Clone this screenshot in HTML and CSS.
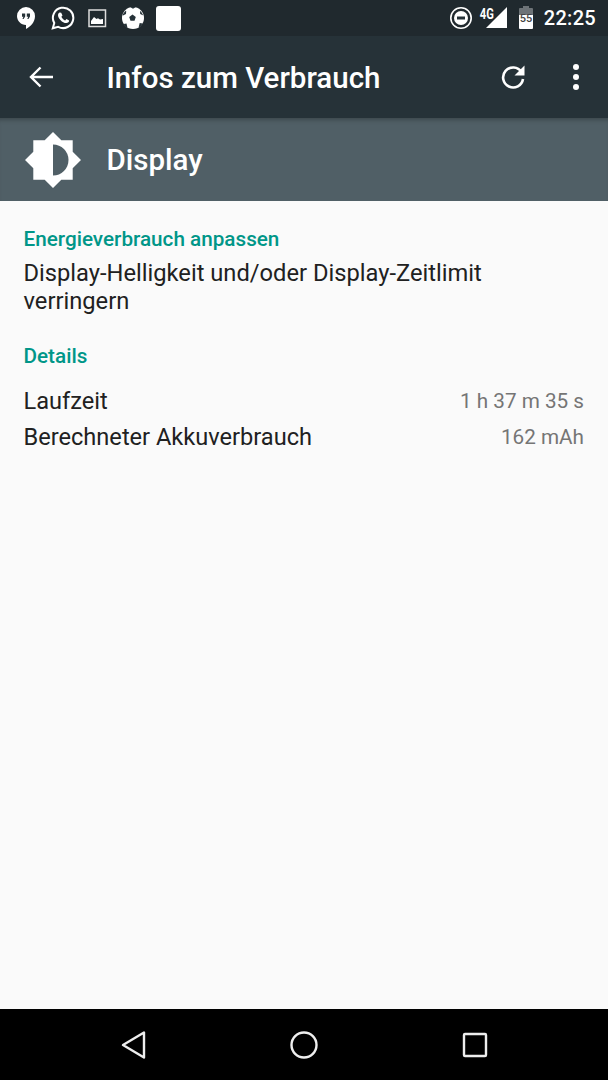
FILE: index.html
```html
<!DOCTYPE html>
<html lang="de">
<head>
<meta charset="UTF-8" />
<meta name="viewport" content="width=device-width, initial-scale=1" />
<title>Infos zum Verbrauch</title>
<link rel="stylesheet" href="styles.css">
</head>
<body>

<!-- Status bar -->
<div class="status-bar">
  <div class="status-left">
    <svg class="ic-hangouts" width="20" height="24" viewBox="0 0 20 24"><path fill="#fff" d="M10 1a9 9 0 0 0-9 9c0 5 4 8.800 9 9v4c4.500-2.300 9-6.800 9-13a9 9 0 0 0-9-9z"/><path fill="#263238" d="M6 7.500h3.200v3l-1.600 2.500h-1.100l.9-2.300H6zM10.800 7.500H14v3l-1.600 2.500h-1.100l.9-2.300h-1.400z"/></svg>
    <svg class="ic-whatsapp" width="24" height="24" viewBox="0 0 24 24"><path fill="none" stroke="#fff" stroke-width="2" d="M1.800 22.300l1.500-5.300a10.200 10.200 0 1 1 3.900 3.800z"/><path fill="#fff" d="M8.700 6.600c-.5 0-1.700.9-1.700 2.600 0 3 4.300 7.900 8.300 7.900 1.700 0 2.900-1.200 2.800-2.500l-2.600-1.500-1.300 1.300c-1.500-.5-3.100-2-3.800-3.700l1.100-1.200-1.300-2.800z"/></svg>
    <svg class="ic-image" width="20" height="20" viewBox="0 0 20 20"><path fill="none" stroke="#ddd" stroke-width="1.500" d="M2 2h16.500v16.500H2z"/><path fill="#fff" d="M4 16v-3l3-4 2.500 2 1.500-.7 2 1.200 3-.5V16z"/></svg>
    <svg class="ic-ball" width="24" height="24" viewBox="0 0 24 24"><circle cx="12" cy="12" r="11" fill="#fff"/><path fill="#263238" d="M11.500 8.500l3.300 2.400-1.300 3.800h-4l-1.300-3.800zM9.500 1.300l2.500 1.500 2.500-1.500-.2-.3a11 11 0 0 0-4.600 0zM19 5.200l.2 2.800 2.600 1.300.2-.4a11 11 0 0 0-2.800-3.900zM2 9.400L5 8l.2-3.100-.4-.2A11 11 0 0 0 1.500 9zM5.500 17.500l-2.900.4a11 11 0 0 0 3.200 3.500l.5-.3zM18.700 17l-1 4 .5.300a11 11 0 0 0 3.500-3.800z"/></svg>
    <span class="ic-blank"></span>
  </div>
  <div class="status-right">
    <svg class="ic-dnd" width="24" height="24" viewBox="0 0 24 24"><circle cx="12" cy="12" r="10.200" fill="none" stroke="#fff" stroke-width="1.600"/><circle cx="12" cy="12" r="7" fill="#fff"/><rect x="8" y="10.500" width="8" height="3" fill="#263238"/></svg>
    <span class="signal">
      <span class="signal-type">4G</span>
      <svg width="22" height="22" viewBox="0 0 22 22"><path fill="#fff" d="M21 0v21H0z"/></svg>
    </span>
    <span class="battery"><span class="battery-level">55</span></span>
    <span class="clock">22:25</span>
  </div>
</div>

<!-- Toolbar -->
<header class="toolbar">
  <svg class="ic-back" width="26" height="24" viewBox="0 0 26 24"><path fill="none" stroke="#fff" stroke-width="2.400" d="M25 12H3M12.500 2.500L3 12l9.500 9.500"/></svg>
  <h1 class="toolbar-title">Infos zum Verbrauch</h1>
  <svg class="ic-refresh" width="26" height="26" viewBox="0 0 26 26"><path fill="none" stroke="#fff" stroke-width="2.600" d="M21.500 8A10 10 0 1 0 23 15"/><path fill="#fff" d="M24.500 1.500v10h-10z"/></svg>
  <span class="ic-more"><i></i><i></i><i></i></span>
</header>

<!-- App header -->
<section class="app-header">
  <svg class="ic-display" width="56" height="56" viewBox="0 0 56 56"><path fill="#fff" d="M28 0l8.300 8.300h11.400v11.400L56 28l-8.300 8.300v11.400H36.300L28 56l-8.300-8.300H8.300V36.300L0 28l8.300-8.300V8.300h11.400z"/><path fill="#505f66" d="M28 12.500a15.500 15.500 0 0 1 0 31z"/></svg>
  <h2 class="app-name">Display</h2>
</section>

<main class="content">
  <h3 class="section-title">Energieverbrauch anpassen</h3>
  <p class="tip">Display-Helligkeit und/oder Display-Zeitlimit verringern</p>

  <h3 class="section-title details-title">Details</h3>
  <div class="detail-row">
    <span>Laufzeit</span>
    <span class="detail-value">1 h 37 m 35 s</span>
  </div>
  <div class="detail-row">
    <span>Berechneter Akkuverbrauch</span>
    <span class="detail-value">162 mAh</span>
  </div>
</main>

<!-- Navigation bar -->
<nav class="nav-bar">
  <svg width="26" height="30" viewBox="0 0 26 30"><path fill="none" stroke="#eee" stroke-width="2.400" stroke-linejoin="round" d="M24 2.500v25L3 15z"/></svg>
  <svg width="28" height="28" viewBox="0 0 28 28"><circle cx="14" cy="14" r="12.500" fill="none" stroke="#eee" stroke-width="2.400"/></svg>
  <svg width="26" height="26" viewBox="0 0 26 26"><rect x="2" y="2" width="22" height="22" rx="1" fill="none" stroke="#eee" stroke-width="2.400"/></svg>
</nav>

</body>
</html>
```

FILE: styles.css
```css
html, body {
  margin: 0;
  padding: 0;
}

body {
  width: 608px;
  height: 1080px;
  display: flex;
  flex-direction: column;
  overflow: hidden;
  background: #fafafa;
  font-family: Roboto, sans-serif;
  color: #212121;
}

h1, h2, h3, p {
  margin: 0;
}

/* Status bar */
.status-bar {
  height: 36px;
  flex: none;
  display: flex;
  justify-content: space-between;
  align-items: center;
  background: #20292e;
  color: #fff;
}

.status-left {
  display: flex;
  align-items: center;
  padding-left: 16px;
}

.ic-whatsapp {
  margin-left: 15px;
}

.ic-image {
  margin-left: 12px;
}

.ic-ball {
  margin-left: 14px;
}

.ic-blank {
  width: 25px;
  height: 25px;
  margin-left: 11px;
  background: #fff;
  border-radius: 3px;
}

.status-right {
  display: flex;
  align-items: center;
  padding-right: 12px;
}

.signal {
  position: relative;
  display: flex;
  margin-left: 13px;
  margin-top: -1px;
}

.signal-type {
  position: absolute;
  top: 0;
  left: -8px;
  font-size: 14px;
  line-height: 14px;
  font-weight: 700;
  transform: scaleX(0.8);
}

.battery {
  position: relative;
  width: 14px;
  height: 21px;
  margin-left: 11px;
  margin-top: 1px;
  border-radius: 1px;
  background: linear-gradient(#6d7377 0 33%, #fff 33%);
}

.battery::before {
  content: "";
  position: absolute;
  top: -2px;
  left: 4px;
  width: 6px;
  height: 2px;
  background: #6d7377;
}

.battery-level {
  position: absolute;
  top: 5px;
  left: 1px;
  font-size: 11px;
  line-height: 11px;
  font-weight: 500;
  color: #444;
}

.clock {
  margin-left: 11px;
  font-size: 20px;
  font-weight: 500;
  letter-spacing: 0.3px;
}

/* Toolbar */
.toolbar {
  height: 82px;
  flex: none;
  display: flex;
  align-items: center;
  background: #263238;
  color: #fff;
}

.ic-back {
  margin-left: 28px;
}

.toolbar-title {
  flex: 1;
  margin-left: 52.500px;
  padding-top: 2px;
  font-size: 29.500px;
  font-weight: 500;
}

.ic-refresh {
  margin-right: 47px;
}

.ic-more {
  display: flex;
  flex-direction: column;
  gap: 4px;
  margin-right: 29px;
}

.ic-more i {
  width: 6px;
  height: 6px;
  border-radius: 50%;
  background: #fff;
}

/* App header */
.app-header {
  height: 83px;
  flex: none;
  display: flex;
  align-items: center;
  background: #505f66;
  color: #fff;
  box-shadow: inset 0 5px 4px -3px rgba(0, 0, 0, 0.25);
}

.ic-display {
  margin-left: 25px;
}

.app-name {
  margin-left: 25.500px;
  padding-top: 1px;
  font-size: 29.500px;
  font-weight: 500;
}

/* Content */
.content {
  flex: 1;
  padding: 26px 24px 0 23.500px;
  font-size: 23.600px;
}

.section-title {
  font-size: 20.700px;
  line-height: 24px;
  font-weight: 500;
  color: #009688;
}

.tip {
  margin-top: 8px;
  line-height: 28px;
  font-size: 23.700px;
}

.details-title {
  margin-top: 29px;
  margin-bottom: 15px;
}

.detail-row {
  display: flex;
  justify-content: space-between;
  align-items: center;
  height: 36px;
}

.detail-value {
  font-size: 20.700px;
  color: #757575;
}

/* Navigation bar */
.nav-bar {
  height: 71px;
  flex: none;
  display: flex;
  justify-content: space-between;
  align-items: center;
  padding: 0 120px;
  background: #000;
}
```
